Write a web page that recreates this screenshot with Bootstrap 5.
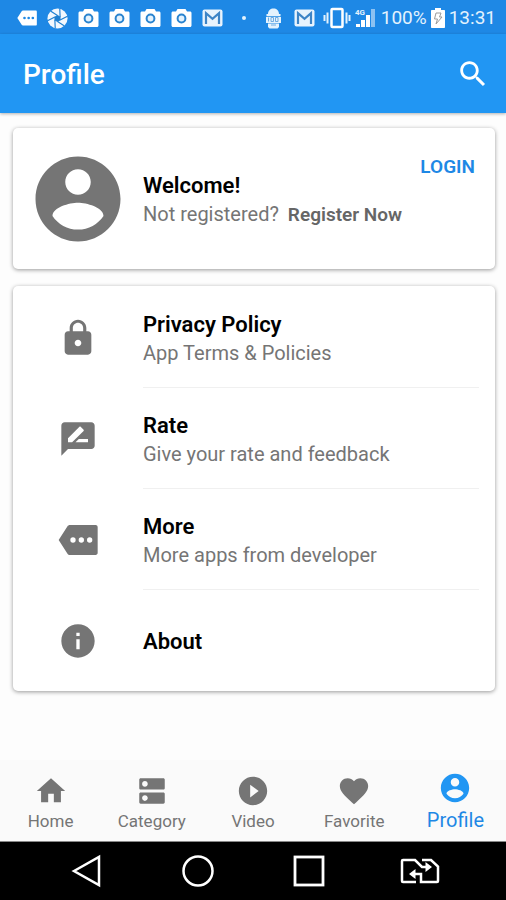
<!DOCTYPE html>
<html lang="en">
<head>
<meta charset="utf-8">
<meta name="viewport" content="width=device-width, initial-scale=1">
<title>Profile</title>
<link href="https://cdn.jsdelivr.net/npm/bootstrap@5.3.0/dist/css/bootstrap.min.css" rel="stylesheet">
<style>
  body { font-family: Roboto, "Liberation Sans", sans-serif; background: #fdfdfd; color: #000; }
  svg { display: block; flex: none; }
  a { text-decoration: none; }
  .status-bar { background: #1e88e5; color: #e3f2fd; height: 34px; padding: 2px 10px 0 11px; font-size: 19px; line-height: 32px; }
  .status-slot { width: 31px; display: flex; justify-content: center; }
  .app-bar { background: #2196f3; color: #fff; height: 79px; padding: 0 16px 0 23px; box-shadow: 0 1px 3px rgba(0,0,0,.3); }
  .app-title { font-size: 28px; line-height: 32px; font-weight: 500; padding-top: 3px; }
  .page-body { padding: 15px 11px 15px 13px; gap: 17px; }
  .panel { border: 0; border-radius: 5px; background: #fff; box-shadow: 0 1px 4px rgba(0,0,0,.4); }
  .lead-icon { width: 130px; flex: none; display: flex; justify-content: center; color: #757575; }
  .welcome { height: 141px; padding-right: 20px; }
  .item-title { font-size: 22px; line-height: 28px; font-weight: 600; color: #000; }
  .item-text { font-size: 20px; line-height: 28px; color: #757575; }
  .register { font-size: 19px; font-weight: 600; color: #666; margin-left: 4px; }
  .login { font-size: 19px; line-height: 24px; font-weight: 600; color: #1e88e5; margin-top: 27px; }
  .menu { padding-top: 1px; }
  .menu-row { height: 101px; padding-right: 16px; }
  .menu-text { border-bottom: 1px solid #f0f0f0; padding-top: 4px; }
  .menu-row:last-child .menu-text { border-color: transparent; }
  .tabs { background: #fafafa; height: 82px; border-bottom: 1px solid #888; }
  .tab { color: #757575; font-size: 17px; line-height: 20px; padding-top: 14px; flex: 1 1 0; }
  .tab-active { color: #1e88e5; font-size: 20px; line-height: 24px; padding-top: 11px; }
  .tab svg { margin-bottom: 3px; }
  .tab-active svg { color: #2196f3; }
  .system-nav { background: #000; height: 58px; padding: 0 31px; }
  .plain-btn { background: none; border: 0; padding: 0; color: inherit; }
  .system-nav .plain-btn { flex: 1 1 0; }
</style>
</head>
<body>
<svg width="0" height="0" class="position-absolute" aria-hidden="true">
  <symbol id="account" viewBox="0 0 24 24"><path fill="currentColor" d="M12 2C6.48 2 2 6.48 2 12s4.48 10 10 10 10-4.48 10-10S17.52 2 12 2zm0 3c1.66 0 3 1.34 3 3s-1.34 3-3 3-3-1.34-3-3 1.34-3 3-3zm0 14.2c-2.5 0-4.71-1.28-6-3.22.03-1.99 4-3.08 6-3.08 1.99 0 5.97 1.09 6 3.08-1.29 1.94-3.5 3.22-6 3.22z"/></symbol>
  <symbol id="more" viewBox="0 0 24 24"><path fill="currentColor" fill-rule="evenodd" d="M22.5 3H7.2c-.7 0-1.2.3-1.6.9L.4 12l5.2 8.1c.4.6.9.9 1.6.9h15.300c.8 0 1.300-.5 1.300-1.300V4.300c0-.8-.5-1.300-1.300-1.300zM9 13.600a1.600 1.600 0 1 1 0-3.200 1.600 1.600 0 0 1 0 3.200zm5 0a1.600 1.600 0 1 1 0-3.200 1.600 1.600 0 0 1 0 3.200zm5 0a1.600 1.600 0 1 1 0-3.200 1.600 1.600 0 0 1 0 3.200z"/></symbol>
  <symbol id="camera" viewBox="0 0 21 20"><path fill="#fff" d="M6.5 1h8l1.500 2.500h3c1 0 1.500.6 1.500 1.500v12.500c0 .9-.6 1.500-1.500 1.500H2C1.100 19 .5 18.400.5 17.500V5c0-.9.5-1.500 1.500-1.500h3z"/><circle cx="10.500" cy="10.500" r="3.900" fill="#e3f2fd" stroke="#2a84cf" stroke-width="2"/></symbol>
  <symbol id="mail" viewBox="0 0 21 18"><rect x=".5" y=".5" width="20" height="17" rx="2" fill="#e8f3fd"/><path d="M4 15V4.200l6.500 5.600L17 4.200V15" fill="none" stroke="#3d84c6" stroke-width="2.200"/></symbol>
</svg>

<div class="d-flex flex-column min-vh-100">
  <div class="status-bar d-flex align-items-center">
    <span class="status-slot text-white"><svg width="20" height="20"><use href="#more"/></svg></span>
    <span class="status-slot"><svg width="21" height="21" viewBox="0 0 24 24"><circle cx="12" cy="12" r="11.500" fill="#f2f8fe"/><g stroke="#1e7fd0" stroke-width="1.300"><path d="M12 8.500 4 3.500M15 10.200 14.600.8M15 13.800 23.400 9.500M12 15.500l8 5M9 13.800l.4 9.400M9 10.200.6 14.500"/></g><path fill="#1e7fd0" d="m12 8 3.500 2v4L12 16l-3.500-2v-4z"/></svg></span>
    <span class="status-slot"><svg width="21" height="20"><use href="#camera"/></svg></span>
    <span class="status-slot"><svg width="21" height="20"><use href="#camera"/></svg></span>
    <span class="status-slot"><svg width="21" height="20"><use href="#camera"/></svg></span>
    <span class="status-slot"><svg width="21" height="20"><use href="#camera"/></svg></span>
    <span class="status-slot"><svg width="21" height="18"><use href="#mail"/></svg></span>
    <span class="status-slot"><svg width="6" height="6"><circle cx="3" cy="3" r="2" fill="#e3f2fd"/></svg></span>
    <div class="d-flex align-items-center ms-auto">
      <svg class="me-2" width="17" height="21" viewBox="0 0 17 21"><path fill="#e3f2fd" d="M3 6C3 2.500 5.500.5 8.500.5S14 2.500 14 6h1.500v2.200H1.500V6zM1 9h15v6H1zM3 15.500h11V19l-1.500 1.500h-8L3 19z"/><path d="M3.500 9.500v4M6 9.500h2.500v4H6zM10.500 9.500H13v4h-2.500zM6 17h5" stroke="#6fabe0" fill="none"/></svg>
      <svg class="mx-1" width="21" height="18"><use href="#mail"/></svg>
      <svg class="ms-1" width="28" height="22" viewBox="0 0 28 22"><rect x="8.500" y="2" width="11" height="18" rx="1" fill="none" stroke="#fff" stroke-width="2.500"/><path d="M4.500 5.500v11M23.500 5.500v11M1.500 8v6M26.500 8v6" stroke="#e3f2fd" stroke-width="2"/></svg>
      <svg class="mx-1" width="22" height="22" viewBox="0 0 22 22"><text x="0" y="8" font-size="8" font-weight="700" fill="#e3f2fd">4G</text><path fill="#fff" d="M1 17h4v3H1zM6 13h4v7H6zM11 8h4v12h-4z"/><path fill="#8cc1f1" d="M16 2h4v18h-4z"/></svg>
      <span>100%</span>
      <svg class="mx-1" width="14" height="20" viewBox="0 0 14 20"><path fill="#fff" d="M4 0h6v2h3c.6 0 1 .4 1 1v16c0 .6-.4 1-1 1H1c-.6 0-1-.4-1-1V3c0-.6.4-1 1-1h3z"/><path d="M5 5h5L8.500 9h2.500l-6 7 1.500-5H3.500z" fill="none" stroke="#9b9b9b"/></svg>
      <span>13:31</span>
    </div>
  </div>

  <header class="app-bar d-flex align-items-center justify-content-between">
    <h1 class="app-title mb-0">Profile</h1>
    <button class="plain-btn" type="button" aria-label="Search"><svg width="34" height="34" viewBox="0 0 24 24"><path fill="currentColor" d="M15.500 14h-.79l-.28-.27C15.410 12.590 16 11.110 16 9.500 16 5.910 13.090 3 9.500 3S3 5.910 3 9.500 5.910 16 9.500 16c1.610 0 3.090-.59 4.230-1.570l.27.28v.79l5 4.990L20.490 19l-4.990-5zm-6 0C7.010 14 5 11.990 5 9.500S7.010 5 9.500 5 14 7.010 14 9.500 11.990 14 9.500 14z"/></svg></button>
  </header>

  <main class="page-body d-flex flex-column flex-grow-1">
    <section class="panel welcome d-flex align-items-center">
      <div class="lead-icon"><svg width="102" height="102"><use href="#account"/></svg></div>
      <div class="flex-grow-1 pt-1">
        <div class="item-title">Welcome!</div>
        <div class="item-text text-nowrap">Not registered? <a class="register" href="#register">Register Now</a></div>
      </div>
      <a class="login align-self-start" href="#login">LOGIN</a>
    </section>

    <nav class="panel menu" aria-label="Options">
      <a class="menu-row d-flex align-items-center" href="#privacy">
        <span class="lead-icon"><svg width="40" height="40" viewBox="0 0 24 24"><path fill="currentColor" d="M18 8h-1V6c0-2.760-2.240-5-5-5S7 3.240 7 6v2H6c-1.100 0-2 .9-2 2v10c0 1.100.9 2 2 2h12c1.100 0 2-.9 2-2V10c0-1.100-.9-2-2-2zm-6 9c-1.100 0-2-.9-2-2s.9-2 2-2 2 .9 2 2-.9 2-2 2zm3.100-9H8.900V6c0-1.710 1.390-3.100 3.100-3.100s3.100 1.390 3.100 3.100v2z"/></svg></span>
        <span class="menu-text d-flex flex-column justify-content-center flex-grow-1 h-100"><span class="item-title">Privacy Policy</span><span class="item-text">App Terms &amp; Policies</span></span>
      </a>
      <a class="menu-row d-flex align-items-center" href="#rate">
        <span class="lead-icon"><svg width="40" height="40" viewBox="0 0 24 24"><path fill="currentColor" d="M20 2H4c-1.100 0-2 .9-2 2v18l4-4h14c1.100 0 2-.9 2-2V4c0-1.100-.9-2-2-2zM6 14v-2.470l6.880-6.880c.2-.2.51-.2.71 0l1.770 1.770c.2.2.2.51 0 .71L8.470 14H6zm12 0h-7.500l2-2H18v2z"/></svg></span>
        <span class="menu-text d-flex flex-column justify-content-center flex-grow-1 h-100"><span class="item-title">Rate</span><span class="item-text">Give your rate and feedback</span></span>
      </a>
      <a class="menu-row d-flex align-items-center" href="#more-apps">
        <span class="lead-icon"><svg width="40" height="40"><use href="#more"/></svg></span>
        <span class="menu-text d-flex flex-column justify-content-center flex-grow-1 h-100"><span class="item-title">More</span><span class="item-text">More apps from developer</span></span>
      </a>
      <a class="menu-row d-flex align-items-center" href="#about">
        <span class="lead-icon"><svg width="40" height="40" viewBox="0 0 24 24"><path fill="currentColor" d="M12 2C6.480 2 2 6.480 2 12s4.480 10 10 10 10-4.480 10-10S17.520 2 12 2zm1 15h-2v-6h2v6zm0-8h-2V7h2v2z"/></svg></span>
        <span class="menu-text d-flex flex-column justify-content-center flex-grow-1 h-100"><span class="item-title">About</span></span>
      </a>
    </nav>
  </main>

  <nav class="tabs d-flex" aria-label="Sections">
    <a class="tab d-flex flex-column align-items-center" href="#home"><svg width="34" height="34" viewBox="0 0 24 24"><path fill="currentColor" d="M10 20v-6h4v6h5v-8h3L12 3 2 12h3v8z"/></svg>Home</a>
    <a class="tab d-flex flex-column align-items-center" href="#category"><svg width="34" height="34" viewBox="0 0 24 24"><path fill="currentColor" d="M20 13H4c-.55 0-1 .45-1 1v6c0 .55.45 1 1 1h16c.55 0 1-.45 1-1v-6c0-.55-.45-1-1-1zM7 19c-1.100 0-2-.9-2-2s.9-2 2-2 2 .9 2 2-.9 2-2 2zM20 3H4c-.55 0-1 .45-1 1v6c0 .55.45 1 1 1h16c.55 0 1-.45 1-1V4c0-.55-.45-1-1-1zM7 9c-1.100 0-2-.9-2-2s.9-2 2-2 2 .9 2 2-.9 2-2 2z"/></svg>Category</a>
    <a class="tab d-flex flex-column align-items-center" href="#video"><svg width="34" height="34" viewBox="0 0 24 24"><path fill="currentColor" d="M12 2C6.480 2 2 6.480 2 12s4.480 10 10 10 10-4.480 10-10S17.520 2 12 2zm-2 14.500v-9l6 4.500-6 4.500z"/></svg>Video</a>
    <a class="tab d-flex flex-column align-items-center" href="#favorite"><svg width="34" height="34" viewBox="0 0 24 24"><path fill="currentColor" d="m12 21.350-1.450-1.320C5.400 15.360 2 12.280 2 8.500 2 5.420 4.420 3 7.500 3c1.740 0 3.410.81 4.500 2.090C13.090 3.810 14.760 3 16.500 3 19.580 3 22 5.420 22 8.500c0 3.780-3.400 6.860-8.550 11.540L12 21.350z"/></svg>Favorite</a>
    <a class="tab tab-active d-flex flex-column align-items-center" href="#profile" aria-current="page"><svg width="34" height="34"><use href="#account"/></svg>Profile</a>
  </nav>

  <div class="system-nav d-flex align-items-center text-white">
    <button class="plain-btn d-flex justify-content-center" type="button" aria-label="Back"><svg width="34" height="34" viewBox="0 0 34 34"><path d="M4 17 29 3v28z" fill="none" stroke="#fff" stroke-width="2.500"/></svg></button>
    <button class="plain-btn d-flex justify-content-center" type="button" aria-label="Home"><svg width="34" height="34" viewBox="0 0 34 34"><circle cx="17" cy="17" r="14.500" fill="none" stroke="#fff" stroke-width="2.500"/></svg></button>
    <button class="plain-btn d-flex justify-content-center" type="button" aria-label="Recent apps"><svg width="34" height="34" viewBox="0 0 34 34"><rect x="3" y="3" width="28" height="28" fill="none" stroke="#fff" stroke-width="2.800"/></svg></button>
    <button class="plain-btn d-flex justify-content-center" type="button" aria-label="Switch SIM"><svg width="40" height="28" viewBox="0 0 40 28"><g fill="none" stroke="#fff" stroke-width="2.500"><path d="M16 25H3q-1 0-1-1V4q0-1 1-1h12l7 7h5M22 3h9l7 6.500V24q0 1-1 1H21v-8h-8"/></g><path fill="#fff" d="m25.500 5 6.500 5-6.500 5zM15.500 12 9 17l6.500 5z"/></svg></button>
  </div>
</div>
<script src="https://cdn.jsdelivr.net/npm/bootstrap@5.3.0/dist/js/bootstrap.bundle.min.js"></script>
</body>
</html>
